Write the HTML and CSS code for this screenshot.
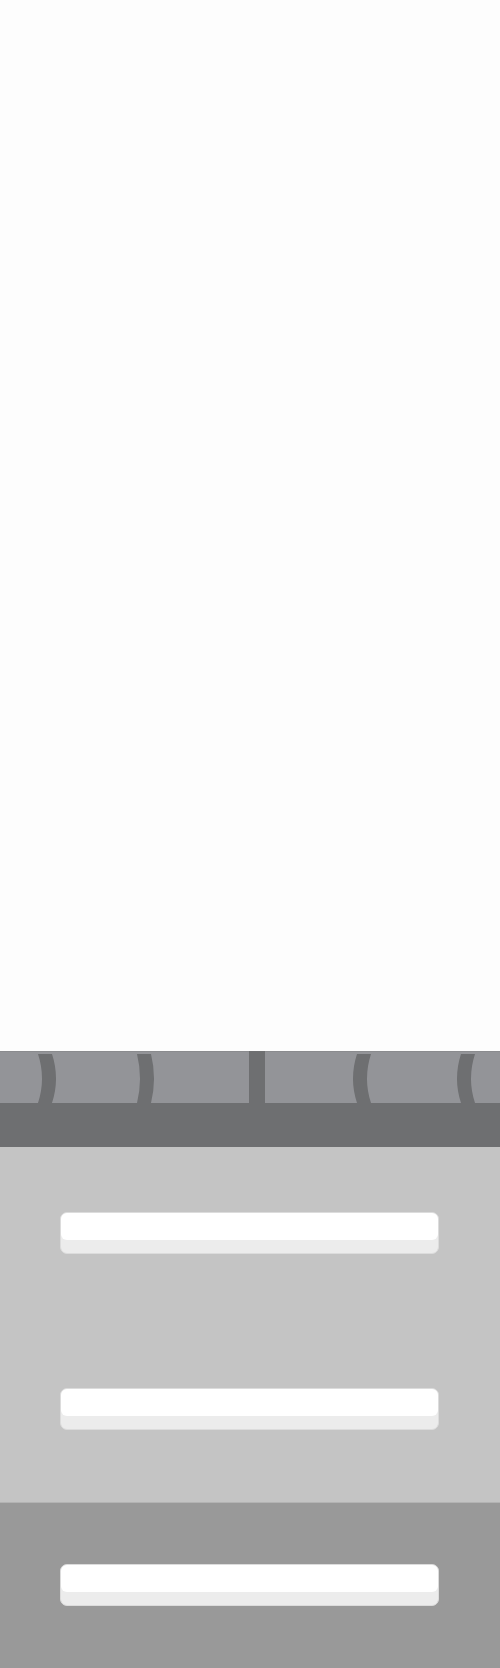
FILE: index.html
```html
<!DOCTYPE html>
<html>
<head>
<meta charset="utf-8">
<link rel="stylesheet" href="styles.css">
</head>
<body>
<div class="page">
  <div class="blank"></div>
  <div class="rail">
    <svg class="rail-art" width="500" height="52" viewBox="0 0 500 52">
      <rect x="0" y="0" width="500" height="52" fill="#939498"/>
      <rect x="0" y="0" width="500" height="1" fill="#8a8b8e"/>
      <path d="M38 3 Q46 27.5 38 52 L52 52 Q60 27.5 52 3 Z" fill="#6e6f71"/>
      <path d="M137 3 Q143 27.5 137 52 L151 52 Q157 27.5 151 3 Z" fill="#6e6f71"/>
      <rect x="249" y="0" width="16" height="52" fill="#6e6f71"/>
      <path d="M357 3 Q349 27.5 357 52 L371 52 Q363 27.5 371 3 Z" fill="#6e6f71"/>
      <path d="M461 3 Q453 27.5 461 52 L475 52 Q467 27.5 475 3 Z" fill="#6e6f71"/>
    </svg>
  </div>
  <div class="ledge"></div>
  <section class="panel panel-light">
    <div class="key"><div class="key-top"></div></div>
    <div class="key"><div class="key-top"></div></div>
  </section>
  <section class="panel panel-dark">
    <div class="key"><div class="key-top"></div></div>
  </section>
</div>
</body>
</html>
```
FILE: styles.css
```css
html, body {
  margin: 0;
  padding: 0;
}
body {
  background: #fdfdfd;
  font-family: "Liberation Sans", Arial, sans-serif;
}
.page {
  width: 500px;
  height: 1668px;
  display: flex;
  flex-direction: column;
  overflow: hidden;
}
.blank {
  height: 1051px;
  flex: none;
  background: #fdfdfd;
}
.rail {
  height: 52px;
  flex: none;
  display: flex;
}
.rail-art {
  display: block;
}
.ledge {
  height: 44px;
  flex: none;
  background: #6e6f71;
}
.panel {
  display: flex;
  flex-direction: column;
  align-items: flex-start;
  flex: none;
}
.panel-light {
  background: #c4c4c4;
  height: 355px;
  box-sizing: border-box;
  padding-top: 65px;
  gap: 134px;
}
.panel-dark {
  background: #999999;
  border-top: 1px solid #b3b3b3;
  height: 166px;
  box-sizing: border-box;
  padding-top: 61px;
}
.key {
  margin-left: 60px;
  width: 379px;
  height: 42px;
  box-sizing: border-box;
  background: #ececec;
  border: 1px solid #dcdcdc;
  border-radius: 7px;
  overflow: hidden;
}
.key-top {
  height: 27px;
  background: #ffffff;
  border-radius: 0 0 6px 6px;
}
```
